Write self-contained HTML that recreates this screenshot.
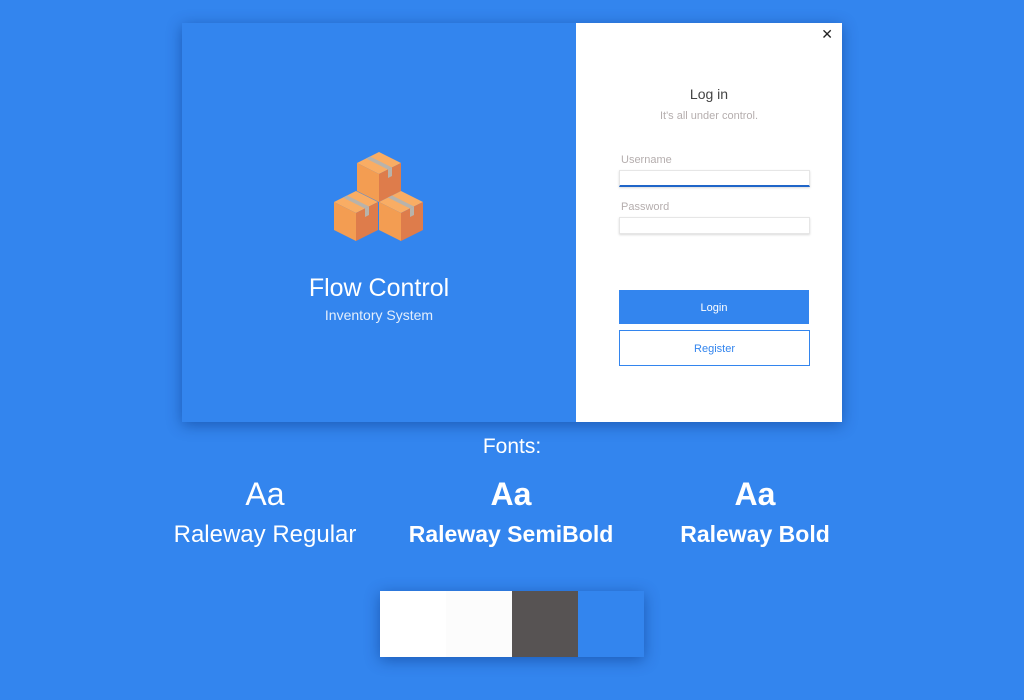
<!DOCTYPE html>
<html><head><meta charset="utf-8"><style>
*{margin:0;padding:0;box-sizing:border-box}
body{width:1024px;height:700px;background:#3385ee;font-family:"Liberation Sans",sans-serif;position:relative;overflow:hidden;color:#fff}
.a{position:absolute}
.card{left:182px;top:23px;width:660px;height:399px;box-shadow:0 3px 14px rgba(0,40,110,.45);background:#3385ee}
.right{left:394px;top:0;width:266px;height:399px;background:#fff}
.c{text-align:center}
input{position:absolute;border:1px solid #e6e6e6;background:#fff;height:17px;width:191px;box-shadow:0 1px 2px rgba(0,0,0,.15)}
</style></head><body>
<div class="a card">
 <svg class="a" style="left:0;top:0" width="394" height="399" viewBox="182 23 394 399">
  <!-- top cube -->
  <polygon points="379,152 401,163 379,174 357,163" fill="#f9ad64"/>
  <polygon points="357,163 379,174 379,202 357,191" fill="#f39d52"/>
  <polygon points="379,174 401,163 401,191 379,202" fill="#de7c4b"/>
  <polygon points="366,158.5 370,156.5 392,167.5 388,169.5" fill="#b8b3ab"/>
  <polygon points="388,169.5 392,167.5 392,176 388,178" fill="#b8b3ab"/>
  <!-- left cube -->
  <polygon points="356,191 378,202 356,213 334,202" fill="#f9ad64"/>
  <polygon points="334,202 356,213 356,241 334,230" fill="#f39d52"/>
  <polygon points="356,213 378,202 378,230 356,241" fill="#de7c4b"/>
  <polygon points="343,197.5 347,195.5 369,206.5 365,208.5" fill="#b8b3ab"/>
  <polygon points="365,208.5 369,206.5 369,215 365,217" fill="#b8b3ab"/>
  <!-- right cube -->
  <polygon points="401,191 423,202 401,213 379,202" fill="#f9ad64"/>
  <polygon points="379,202 401,213 401,241 379,230" fill="#f39d52"/>
  <polygon points="401,213 423,202 423,230 401,241" fill="#de7c4b"/>
  <polygon points="388,197.5 392,195.5 414,206.5 410,208.5" fill="#b8b3ab"/>
  <polygon points="410,208.5 414,206.5 414,215 410,217" fill="#b8b3ab"/>
 </svg>
 <div class="a c" style="left:0;width:394px;top:250px;font-size:25px;line-height:30px">Flow Control</div>
 <div class="a c" style="left:0;width:394px;top:284px;font-size:14px;color:#e3eefc">Inventory System</div>
 <div class="a right">
  <div class="a" style="right:9px;top:3px;font-size:14px;color:#222">✕</div>
  <div class="a c" style="left:0;width:266px;top:63px;font-size:14px;color:#444">Log in</div>
  <div class="a c" style="left:0;width:266px;top:87px;font-size:11px;color:#b5aeae">It's all under control.</div>
  <div class="a" style="left:45px;top:131px;font-size:11px;color:#b5aeae">Username</div>
  <input style="left:43px;top:147px;border-bottom:2px solid #1f65c8">
  <div class="a" style="left:45px;top:178px;font-size:11px;color:#b5aeae">Password</div>
  <input style="left:43px;top:194px">
  <div class="a c" style="left:43px;top:267px;width:190px;height:34px;background:#3385ee;font-size:11px;line-height:36px">Login</div>
  <div class="a c" style="left:43px;top:307px;width:191px;height:36px;border:1px solid #3385ee;font-size:11px;line-height:36px;color:#3385ee">Register</div>
 </div>
</div>
<div class="a c" style="left:0;width:1024px;top:435px;font-size:21px">Fonts:</div>
<div class="a c" style="left:145px;width:240px;top:476px;font-size:32px">Aa</div>
<div class="a c" style="left:145px;width:240px;top:521px;font-size:24px">Raleway Regular</div>
<div class="a c" style="left:391px;width:240px;top:476px;font-size:32px;font-weight:bold">Aa</div>
<div class="a c" style="left:391px;width:240px;top:521px;font-size:23px;font-weight:bold">Raleway SemiBold</div>
<div class="a c" style="left:635px;width:240px;top:476px;font-size:32px;font-weight:bold">Aa</div>
<div class="a c" style="left:635px;width:240px;top:521px;font-size:23px;font-weight:bold">Raleway Bold</div>
<div class="a" style="left:380px;top:591px;width:264px;height:66px;display:flex;box-shadow:0 3px 14px rgba(0,40,110,.45)">
 <div style="flex:1;background:#fff"></div><div style="flex:1;background:#fcfcfc"></div><div style="flex:1;background:#575353"></div><div style="flex:1;background:#3385ee"></div>
</div>
</body></html>
